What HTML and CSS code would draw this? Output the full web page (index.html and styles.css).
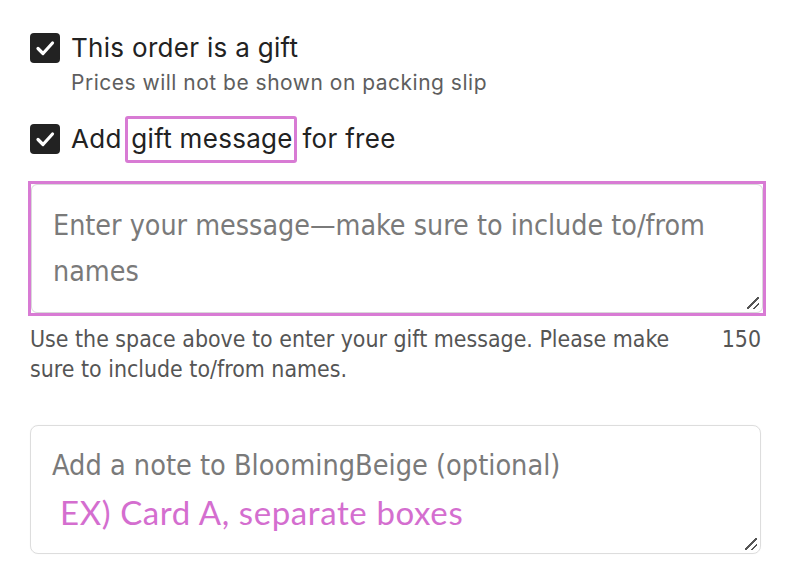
FILE: index.html
```html
<!DOCTYPE html>
<html>
<head>
<meta charset="utf-8">
<link rel="stylesheet" href="styles.css">
</head>
<body>
<div class="page">
  <div class="check-row">
    <span class="box"><svg viewBox="0 0 30 30" width="30" height="30"><path d="M8 15.5 L13 20.5 L22.5 10" fill="none" stroke="#fff" stroke-width="3.2" stroke-linecap="round" stroke-linejoin="round"/></svg></span>
    <span class="label">This order is a gift</span>
  </div>
  <div class="sub">Prices will not be shown on packing slip</div>
  <div class="check-row second">
    <span class="box"><svg viewBox="0 0 30 30" width="30" height="30"><path d="M8 15.5 L13 20.5 L22.5 10" fill="none" stroke="#fff" stroke-width="3.2" stroke-linecap="round" stroke-linejoin="round"/></svg></span>
    <span class="label">Add <span class="hl">gift message</span> for free</span>
  </div>
  <div class="ta-wrap">
    <div class="ta">
      <div class="ph">Enter your message—make sure to include to/from names</div>
      <span class="grip"></span>
    </div>
  </div>
  <div class="help">
    <div class="help-text">Use the space above to enter your gift message. Please make sure to include to/from names.</div>
    <div class="count">150</div>
  </div>
  <div class="ta note">
    <div class="ph">Add a note to BloomingBeige (optional)</div>
    <div class="ex">EX) Card A, separate boxes</div>
    <span class="grip"></span>
  </div>
</div>
</body>
</html>
```
FILE: styles.css
```css
html, body { margin: 0; padding: 0; background: #fff; }
.page {
  width: 794px;
  height: 586px;
  overflow: hidden;
  box-sizing: border-box;
  padding: 33px 33px 0 30px;
  font-family: "Inter", "Noto Sans", sans-serif;
  color: #222;
}
.check-row { display: flex; align-items: center; height: 30px; }
.check-row.second { margin-top: 27px; }
.box {
  width: 30px; height: 30px; border-radius: 4px; background: #222;
  display: flex; flex: none;
}
.label { margin-left: 11px; font-size: 26px; line-height: 30px; letter-spacing: 0.3px; }
.hl {
  border: 3px solid #d87bd4; border-radius: 3px;
  padding: 4px 1px 6px 3px; margin-left: -4px; margin-right: -2px;
}
.sub { margin: 6px 0 0 41px; font-size: 21px; letter-spacing: 0.5px; color: #5e5e5e; line-height: 28px; }
.ta-wrap {
  margin: 27px 0 0 -2px;
  border: 3px solid #d87bd4;
  width: 732px;
}
.ta {
  position: relative;
  border: 1px solid #d9d9d9;
  border-radius: 6px;
  box-sizing: border-box;
}
.ta-wrap .ta { height: 129px; padding: 18px 40px 0 21px; }
.ph {
  font-family: "DejaVu Sans Condensed", "Roboto", sans-serif;
  font-stretch: condensed;
  font-size: 28px; line-height: 47px; color: #7a7a7a;
}
.ta-wrap .ph { font-size: 28.4px; line-height: 46px; }
.grip {
  position: absolute; right: 3px; bottom: 3px; width: 12px; height: 12px;
  background:
    linear-gradient(135deg, transparent 45%, #555 45%, #555 55%, transparent 55%) no-repeat 0 0 / 12px 12px,
    linear-gradient(135deg, transparent 45%, #555 45%, #555 60%, transparent 60%) no-repeat 6px 6px / 6px 6px;
}
.help {
  display: flex; justify-content: space-between; align-items: flex-start;
  margin-top: 8px; width: 731px;
  font-family: "DejaVu Sans Condensed", "Roboto", sans-serif;
  font-stretch: condensed;
  font-size: 22.9px; line-height: 30px; color: #555;
}
.help-text { width: 665px; }
.note {
  margin-top: 41px; width: 731px; height: 129px;
  border-color: #ddd; border-radius: 8px;
  padding: 20px 0 0 21px;
  box-shadow: 0 0 1px rgba(0,0,0,0.08);
}
.note .ph { font-size: 28.6px; line-height: 38px; }
.ex {
  margin: 8px 0 0 8px;
  font-family: "Lato", "Open Sans", sans-serif;
  font-size: 33px; letter-spacing: 0.6px; line-height: 40px; color: #d46ecf;
}
```
